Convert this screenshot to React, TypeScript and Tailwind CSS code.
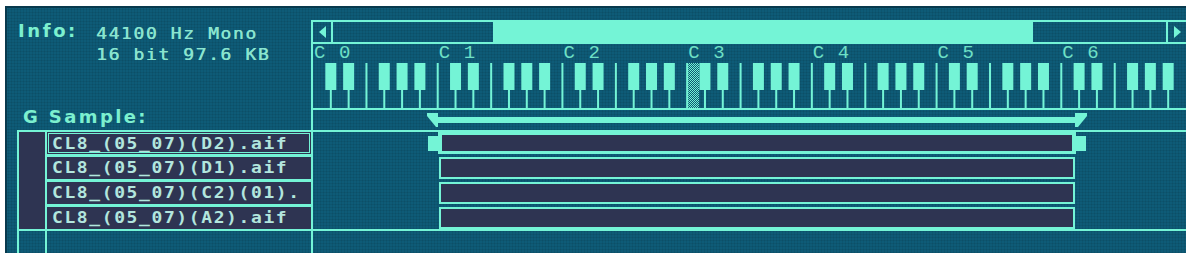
import React from "react";

// sampler mapping editor panel
const MINT = "#74f4d6";

const samples = [
  "CL8_(05_07)(D2).aif",
  "CL8_(05_07)(D1).aif",
  "CL8_(05_07)(C2)(01).",
  "CL8_(05_07)(A2).aif",
];

function Keyboard() {
  const W = 873;
  const H = 45;
  const oct = W / 7;
  const wk = oct / 7;
  const lines = [];
  for (let i = 1; i < 49; i++) {
    lines.push(<rect key={"l" + i} x={i * wk - 1} y={0} width={2} height={H} fill={MINT} />);
  }
  const blacks = [];
  for (let o = 0; o < 7; o++) {
    for (const idx of [1, 2, 4, 5, 6]) {
      const cx = o * oct + idx * wk;
      blacks.push(<rect key={"b" + o + idx} x={cx - 5.5} y={0} width={11} height={27} fill={MINT} />);
    }
  }
  return (
    <svg width={W} height={H} className="block">
      <defs>
        <pattern id="chk" width="2" height="2" patternUnits="userSpaceOnUse">
          <rect width="1" height="1" fill={MINT} />
          <rect x="1" y="1" width="1" height="1" fill={MINT} />
        </pattern>
      </defs>
      {lines}
      {blacks}
      <rect x={3 * oct + 1} y={0} width={11} height={H} fill="url(#chk)" />
    </svg>
  );
}

function RangeBar() {
  return (
    <svg width={873} height={20} className="block">
      <polygon points="114,3 125,3 125,17 123,17 114,6" fill={MINT} />
      <rect x={125} y={7} width={637} height={6} fill={MINT} />
      <polygon points="762,3 774,3 774,6 765,17 762,17" fill={MINT} />
    </svg>
  );
}

export default function App() {
  return (
    <div className="w-[1193px] h-[262px] bg-white pt-[6px] pl-[5px] font-['DejaVu_Sans_Mono',monospace]">
      <div className="w-[1181px] h-[247px] bg-[#0e5b77] shadow-[inset_2px_2px_0_0_#08394d] flex flex-col overflow-hidden bg-[linear-gradient(rgba(0,0,0,0.07)_1px,transparent_1px),linear-gradient(90deg,rgba(0,0,0,0.07)_1px,transparent_1px)] bg-[size:3px_3px]">
        {/* top block: info + keyboard */}
        <div className="h-[124px] flex">
          <div className="w-[306px] flex flex-col">
            <div className="flex">
              <div className="ml-[13px] w-[78px] mt-[15px] leading-[20px] text-[18px] font-bold tracking-[2.6px] text-[#7cf0cf] font-['DejaVu_Sans',sans-serif]">
                Info:
              </div>
              <div className="mt-[17px] text-[18px] leading-[21px] tracking-[1.6px] text-[#8ae4cf] [text-shadow:0.5px_0_0_#8ae4cf]">
                <div className="scale-y-[0.85]">44100 Hz Mono</div>
                <div className="scale-y-[0.85]">16 bit 97.6 KB</div>
              </div>
            </div>
            <div className="mt-[42px] ml-[18px] leading-[20px] text-[18px] font-bold tracking-[2.4px] text-[#7cf0cf] font-['DejaVu_Sans',sans-serif] whitespace-pre">
              G Sample:
            </div>
          </div>
          <div className="flex-1 pt-[14px] flex flex-col">
            <div className="border-l-2 border-t-2 border-[#74f4d6] flex flex-col">
              {/* scrollbar */}
              <div className="h-[22px] border-b-2 border-[#74f4d6] flex">
                <div className="w-[20px] border-r-2 border-[#74f4d6] flex items-center justify-center">
                  <div className="w-0 h-0 border-y-[6px] border-y-transparent border-r-[7px] border-r-[#74f4d6]" />
                </div>
                <div className="flex-1">
                  <div className="ml-[160px] w-[540px] h-full bg-[#74f4d6]" />
                </div>
                <div className="w-[20px] border-l-2 border-[#74f4d6] flex items-center justify-center">
                  <div className="w-0 h-0 border-y-[6px] border-y-transparent border-l-[7px] border-l-[#74f4d6]" />
                </div>
              </div>
              {/* note labels */}
              <div className="h-[19px] grid grid-cols-7 font-['Liberation_Mono',monospace] text-[19px] leading-[19px] tracking-[1.1px] text-[#6ee0c6] whitespace-pre">
                {[0, 1, 2, 3, 4, 5, 6].map((n) => (
                  <div key={n} className="pl-[1px]">
                    C {n}
                  </div>
                ))}
              </div>
              <Keyboard />
              <div className="h-[2px] bg-[#74f4d6]" />
              <RangeBar />
            </div>
          </div>
        </div>

        {/* sample rows */}
        <div className="flex-1 flex pl-[12px]">
          <div className="flex-1 border-l-2 border-[#74f4d6] flex flex-col">
            <div className="border-y-2 border-[#74f4d6] flex h-[101px]">
              <div className="w-[28px] bg-[#2e3452] border-r-2 border-[#74f4d6]" />
              <div className="w-[266px] border-r-2 border-[#74f4d6] bg-[#74f4d6] flex flex-col gap-[3px]">
                {samples.map((s, i) => (
                  <div key={s} className="h-[22px] bg-[#2e3452] overflow-hidden">
                    <div
                      className={
                        i === 0
                          ? "m-[1px] h-[20px] border border-[#74f4d6] pl-[3px] overflow-x-hidden"
                          : "h-[22px] pl-[5px] pt-[1px] overflow-x-hidden"
                      }
                    >
                      <div className="text-[18px] font-bold leading-[19px] tracking-[1.6px] text-[#b2e6de] whitespace-nowrap scale-y-[0.85] origin-center">
                        {s}
                      </div>
                    </div>
                  </div>
                ))}
              </div>
              <div className="flex-1 flex flex-col gap-[3px]">
                <div className="h-[22px] flex items-center ml-[115px]">
                  <div className="w-[10px] h-[15px] bg-[#74f4d6]" />
                  <div className="w-[638px] h-[22px] bg-[#74f4d6] px-[4px] py-[3px]">
                    <div className="w-full h-full bg-[#2e3452]" />
                  </div>
                  <div className="w-[10px] h-[15px] bg-[#74f4d6]" />
                </div>
                {[1, 2, 3].map((i) => (
                  <div key={i} className="h-[22px] ml-[126px] w-[636px] border-2 border-[#74f4d6] bg-[#2e3452]" />
                ))}
              </div>
            </div>
            <div className="flex-1 flex">
              <div className="w-[28px] border-r-2 border-[#74f4d6]" />
              <div className="w-[266px] border-r-2 border-[#74f4d6]" />
              <div className="flex-1" />
            </div>
          </div>
        </div>
      </div>
    </div>
  );
}
